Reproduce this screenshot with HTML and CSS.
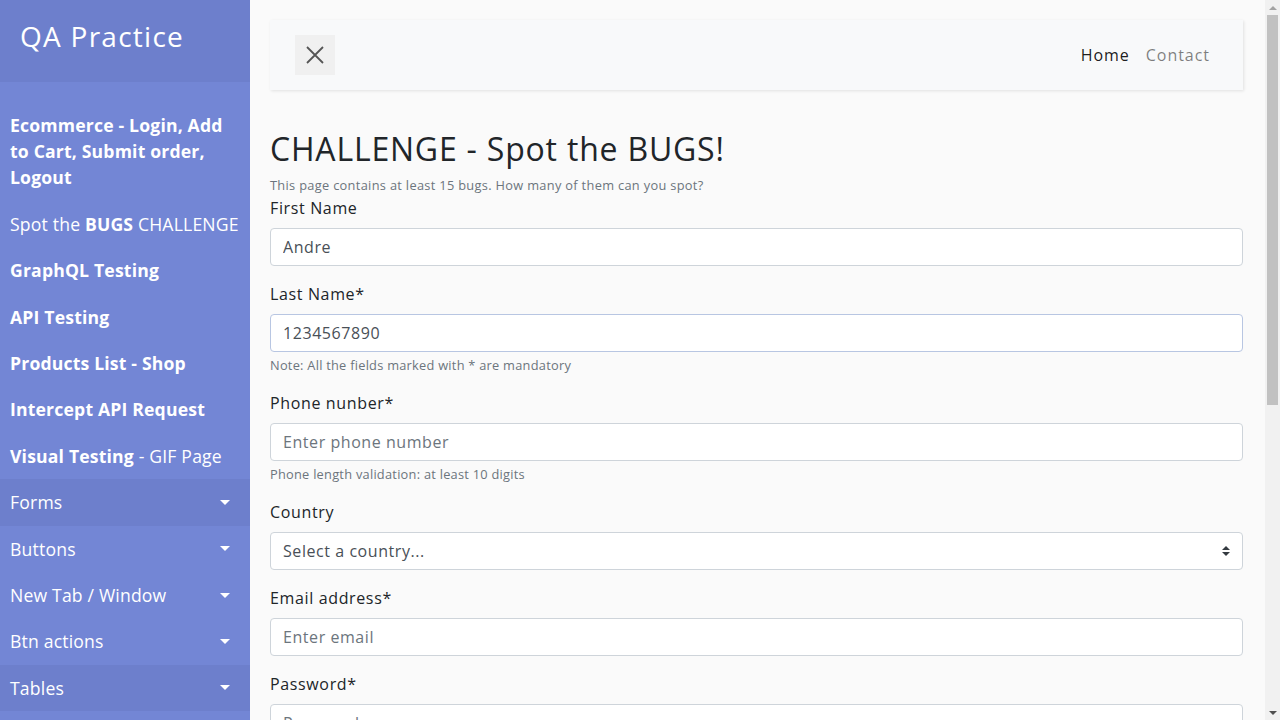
FILE: index.html
```html
<!DOCTYPE html>
<html lang="en">
<head>
<meta charset="utf-8">
<title>QA Practice | Spot the BUGS</title>
<link rel="stylesheet" href="styles.css">
</head>
<body>
<div class="wrapper">
  <nav class="sidebar">
    <div class="sidebar-header">
      <h3 class="brand">QA Practice</h3>
    </div>
    <ul class="components">
      <li><a href="#"><strong>Ecommerce - Login, Add to Cart, Submit order, Logout</strong></a></li>
      <li><a href="#">Spot the <strong>BUGS</strong> CHALLENGE</a></li>
      <li><a href="#"><strong>GraphQL Testing</strong></a></li>
      <li><a href="#"><strong>API Testing</strong></a></li>
      <li><a href="#"><strong>Products List - Shop</strong></a></li>
      <li><a href="#"><strong>Intercept API Request</strong></a></li>
      <li><a href="#"><strong>Visual Testing</strong> - GIF Page</a></li>
      <li class="dark"><a href="#" class="toggle">Forms <span class="caret"></span></a></li>
      <li><a href="#" class="toggle">Buttons <span class="caret"></span></a></li>
      <li><a href="#" class="toggle">New Tab / Window <span class="caret"></span></a></li>
      <li><a href="#" class="toggle">Btn actions <span class="caret"></span></a></li>
      <li class="dark"><a href="#" class="toggle">Tables <span class="caret"></span></a></li>
      <li><a href="#" class="toggle">Alerts <span class="caret"></span></a></li>
      <li><a href="#" class="toggle">Iframes <span class="caret"></span></a></li>
      <li><a href="#" class="toggle">Drag and Drop <span class="caret"></span></a></li>
      <li><a href="#">File Upload</a></li>
      <li><a href="#">Pagination</a></li>
      <li><a href="#">Loader</a></li>
      <li><a href="#">Calendar</a></li>
      <li><a href="#">Shadow DOM</a></li>
      <li><a href="#">Hover</a></li>
      <li><a href="#">Auth</a></li>
      <li><a href="#">Random Data</a></li>
      <li><a href="#">Misc</a></li>
    </ul>
  </nav>

  <div class="content">
    <nav class="navbar">
      <div class="navbar-inner">
        <button class="close-btn" type="button" aria-label="Toggle sidebar">
          <svg width="18" height="18" viewBox="0 0 18 18" aria-hidden="true">
            <path d="M1 1 L17 17 M17 1 L1 17" stroke="#555" stroke-width="1.8" fill="none"/>
          </svg>
        </button>
        <ul class="nav-links">
          <li><a href="#" class="nav-link active">Home</a></li>
          <li><a href="#" class="nav-link">Contact</a></li>
        </ul>
      </div>
    </nav>

    <h2 class="title">CHALLENGE - Spot the BUGS!</h2>
    <p class="intro">This page contains at least 15 bugs. How many of them can you spot?</p>

    <form class="form">
      <div class="form-group">
        <label class="label" for="firstName">First Name</label>
        <input class="form-control" id="firstName" type="text" value="Andre">
      </div>
      <div class="form-group">
        <label class="label" for="lastName">Last Name*</label>
        <input class="form-control focused" id="lastName" type="text" value="1234567890">
        <small class="form-text">Note: All the fields marked with * are mandatory</small>
      </div>
      <div class="form-group">
        <label class="label" for="phone">Phone nunber*</label>
        <input class="form-control" id="phone" type="text" placeholder="Enter phone number">
        <small class="form-text">Phone length validation: at least 10 digits</small>
      </div>
      <div class="form-group">
        <label class="label" for="country">Country</label>
        <select class="form-control select" id="country">
          <option>Select a country...</option>
        </select>
      </div>
      <div class="form-group">
        <label class="label" for="email">Email address*</label>
        <input class="form-control" id="email" type="email" placeholder="Enter email">
      </div>
      <div class="form-group">
        <label class="label" for="password">Password*</label>
        <input class="form-control" id="password" type="password" placeholder="Password">
      </div>
      <div class="form-group check">
        <input type="checkbox" id="terms">
        <label for="terms">I agree with the terms and conditions</label>
      </div>
      <button type="button" class="btn-primary">Register</button>
    </form>
  </div>
</div>

<div class="scrollbar" aria-hidden="true">
  <span class="sb-arrow up"></span>
  <span class="sb-track"><span class="sb-thumb"></span></span>
  <span class="sb-arrow down"></span>
</div>
</body>
</html>
```

FILE: styles.css
```css
* { box-sizing: border-box; }

html, body {
  margin: 0;
  padding: 0;
}

body {
  font-family: "Open Sans", "Liberation Sans", sans-serif;
  font-size: 16px;
  line-height: 1.5;
  letter-spacing: 0.04em;
  color: #212529;
  background: #fafafa;
  padding-right: 15px;
}

.wrapper {
  display: flex;
  align-items: stretch;
  width: 100%;
}

/* ---------- Sidebar ---------- */
.sidebar {
  flex: 0 0 250px;
  width: 250px;
  min-height: 100vh;
  background: #7386d5;
  color: #fff;
}

.sidebar-header {
  padding: 20px;
  background: #6d7fcc;
}

.brand {
  margin: 0 0 8px;
  font-size: 28px;
  line-height: 1.2;
  font-weight: 500;
  letter-spacing: 0.045em;
  color: #fff;
}

.components {
  list-style: none;
  margin: 0;
  padding: 20px 0;
  border-bottom: 1px solid #47748b;
}

.components a {
  display: block;
  padding: 10px;
  font-size: 17.6px;
  line-height: 1.5;
  letter-spacing: 0.01em;
  color: #fff;
  text-decoration: none;
  font-weight: 400;
}

.components strong {
  font-weight: 700;
  letter-spacing: 0.01em;
}

.components .dark { background: #6d7fcc; }

.components .toggle {
  display: flex;
  justify-content: space-between;
  align-items: center;
  padding-right: 20px;
}

.caret {
  width: 0;
  height: 0;
  border-top: 5px solid #fff;
  border-left: 5px solid transparent;
  border-right: 5px solid transparent;
}

/* ---------- Content ---------- */
.content {
  flex: 1 1 auto;
  min-width: 0;
  padding: 20px 22px 20px 20px;
}

.navbar {
  background: #f8f9fa;
  padding: 15px 10px;
  margin-bottom: 40px;
  box-shadow: 1px 1px 3px rgba(0, 0, 0, 0.1);
}

.navbar-inner {
  display: flex;
  justify-content: space-between;
  align-items: center;
  padding: 0 15px;
}

.close-btn {
  width: 40px;
  height: 40px;
  border: 0;
  padding: 0;
  background: #f0f0f0;
  display: flex;
  align-items: center;
  justify-content: center;
  cursor: pointer;
}

.nav-links {
  list-style: none;
  display: flex;
  margin: 0;
  padding: 0;
}

.nav-link {
  display: block;
  padding: 8px;
  color: rgba(0, 0, 0, 0.5);
  text-decoration: none;
  font-weight: 400;
  letter-spacing: 0.06em;
}

.nav-link.active { color: rgba(0, 0, 0, 0.9); }

.title {
  margin: 0 0 8px;
  font-size: 32px;
  line-height: 1.2;
  font-weight: 500;
  letter-spacing: 0.025em;
  color: #212529;
}

.intro {
  margin: 0;
  font-size: 12.8px;
  line-height: 1.5;
  letter-spacing: 0.025em;
  color: #6c757d;
}

.form-group { margin-bottom: 16px; }

.label {
  display: inline-block;
  margin-bottom: 8px;
  color: #212529;
}

.form-control {
  display: block;
  width: 100%;
  height: 38px;
  padding: 6px 12px;
  font-family: inherit;
  font-size: 16px;
  line-height: 1.5;
  letter-spacing: 0.035em;
  color: #495057;
  background: #fff;
  border: 1px solid #ced4da;
  border-radius: 4px;
  outline: none;
}

.form-control::placeholder { color: #6c757d; opacity: 1; }

.form-control.focused { border-color: #b8c6e2; }

.select {
  appearance: none;
  -webkit-appearance: none;
  padding-right: 28px;
  background: #fff url("data:image/svg+xml,%3csvg xmlns='http://www.w3.org/2000/svg' width='4' height='5' viewBox='0 0 4 5'%3e%3cpath fill='%23343a40' d='M2 0L0 2h4zm0 5L0 3h4z'/%3e%3c/svg%3e") no-repeat right 12px center / 8px 10px;
}

.form-text {
  display: block;
  margin-top: 4px;
  font-size: 12.8px;
  line-height: 1.5;
  letter-spacing: 0.02em;
  color: #6c757d;
}

.check {
  display: flex;
  align-items: center;
  gap: 8px;
}

.btn-primary {
  font-family: inherit;
  font-size: 16px;
  line-height: 1.5;
  padding: 6px 12px;
  color: #fff;
  background: #007bff;
  border: 1px solid #007bff;
  border-radius: 4px;
}

/* ---------- Window scrollbar ---------- */
.scrollbar {
  position: fixed;
  top: 0;
  right: 0;
  width: 15px;
  height: 100vh;
  background: #f1f1f1;
  display: flex;
  flex-direction: column;
}

.sb-arrow {
  flex: 0 0 15px;
  display: flex;
  align-items: center;
  justify-content: center;
}

.sb-arrow::before {
  content: "";
  width: 0;
  height: 0;
  border-left: 4px solid transparent;
  border-right: 4px solid transparent;
}

.sb-arrow.up::before { border-bottom: 4px solid #a3a3a3; }
.sb-arrow.down::before { border-top: 4px solid #505050; }

.sb-track {
  flex: 1 1 auto;
  display: flex;
  flex-direction: column;
  padding: 0 2px;
}

.sb-thumb {
  height: 390px;
  background: #c1c1c1;
}
```
